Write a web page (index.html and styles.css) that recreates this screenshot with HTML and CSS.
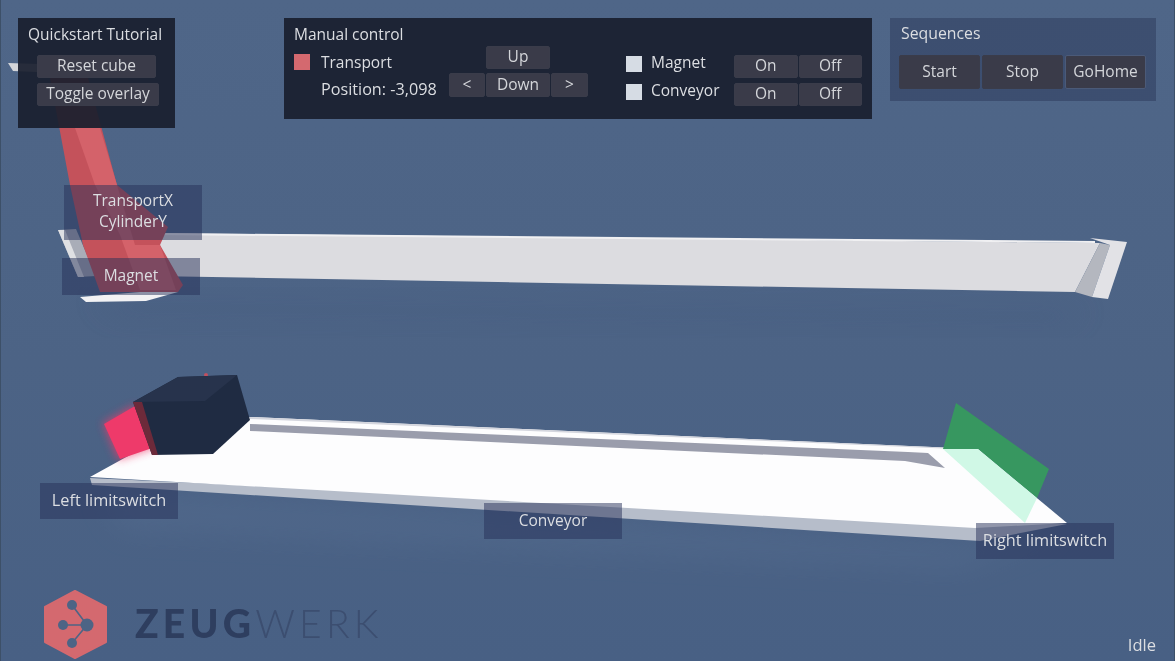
FILE: index.html
```html
<!DOCTYPE html>
<html lang="en">
<head>
  <meta charset="UTF-8">
  <title>Quickstart Tutorial</title>
  <link rel="stylesheet" href="styles.css">
</head>
<body>
  <div class="stage">

    <!-- 3d scene -->
    <svg class="scene" width="1175" height="661" viewBox="0 0 1175 661">
      <defs>
        <filter id="glow" x="-50%" y="-50%" width="200%" height="200%"><feGaussianBlur stdDeviation="4"/></filter>
        <filter id="soft" x="-20%" y="-50%" width="140%" height="200%"><feGaussianBlur stdDeviation="14"/></filter>
      </defs>

      <polygon points="90,300 1090,310 1060,325 120,315" fill="#40557a" opacity=".25" filter="url(#soft)"/>
      <polygon points="100,490 980,545 1070,530 960,570 120,530" fill="#5b7396" opacity=".3" filter="url(#soft)"/>

      <!-- upper rail -->
      <polygon points="8,63 37,64 37,72 13,71" fill="#d4d6da"/>
      <polygon points="58,230 76,229 96,276 78,277" fill="#a9adb8"/>
      <polygon points="58,230 65,230 84,277 78,277" fill="#dfe0e3"/>
      <polygon points="155,233 1100,243 1075,292 150,276" fill="#dcdce0"/>
      <polygon points="155,233 1095,241 1095,243 155,235" fill="#f0f0f2"/>
      <polygon points="1100,243 1110,245 1092,297 1075,292" fill="#b4b7bf"/>
      <polygon points="1090,238 1127,242 1108,299 1092,297 1110,245" fill="#e2e2e6"/>
      <polygon points="80,297 176,289 178,292 146,301 86,302" fill="#f2f2f4"/>

      <!-- transport beam -->
      <polygon points="50,78 88,78 117,185 168,227 160,245 183,285 178,292 100,292 83,245 70,185" fill="#c4525b"/>
      <polygon points="75,128 100,128 117,185 135,245 160,245 176,290 140,290 120,235 95,185" fill="#d4626a"/>

      <!-- conveyor -->
      <polygon points="90,478 92,485 980,541 1067,524" fill="#b6bdca"/>
      <polygon points="90,477 148,445 250,417 978,449 1067,523 975,528" fill="#fdfdfe"/>
      <polygon points="250,424 908,452 928,453 945,468 905,461 250,431" fill="#9a9dac"/>
      <polygon points="250,417 978,449 978,450 250,419" fill="#d4d6de"/>

      <!-- right limit switch -->
      <polygon points="956,403 1049,469 1037,498 978,449 943,449" fill="#379760"/>
      <polygon points="943,449 978,449 1037,498 1025,523" fill="#d0f8e6"/>

      <!-- left limit switch -->
      <polygon points="103,423 135,405 155,448 118,460" fill="#ee3a6a" filter="url(#glow)" opacity=".7"/>
      <polygon points="104,424 135,406 158,446 120,459" fill="#ee3a6a"/>

      <!-- cube -->
      <circle cx="206" cy="375" r="2" fill="#c25060"/>
      <polygon points="133,402 178,377 237,375 250,420 213,454 152,455" fill="#1f2b42"/>
      <polygon points="133,402 178,377 237,375 205,401" fill="#27334c"/>
      <polygon points="133,402 152,455 158,455 142,402" fill="#6c2a3a"/>

      <!-- logo -->
      <polygon points="75,591 106,607 106,642 75,658 45,642 45,607" fill="#d4696f" stroke="#d4696f" stroke-width="2" stroke-linejoin="round"/>
      <path d="M72,605 L87,625 L72,643 M63,625 L87,625" fill="none" stroke="#4d6485" stroke-width="1.6"/>
      <circle cx="72" cy="605" r="5" fill="#4d6485"/>
      <circle cx="63" cy="625" r="5" fill="#4d6485"/>
      <circle cx="72" cy="643" r="5" fill="#4d6485"/>
      <circle cx="87" cy="625" r="6.5" fill="#4d6485"/>
    </svg>

    <div class="wordmark"><b>ZEUG</b>WERK</div>

    <!-- panels -->
    <div class="panel panel-tutorial">
      <div class="title">Quickstart Tutorial</div>
      <button class="btn btn-reset">Reset cube</button>
      <button class="btn btn-overlay">Toggle overlay</button>
    </div>

    <div class="panel panel-manual">
      <div class="title">Manual control</div>
      <div class="manual-body">
        <div class="transport">
          <div class="io"><span class="swatch swatch-red"></span>Transport</div>
          <div class="position">Position: -3,098</div>
        </div>
        <div class="jog">
          <button class="btn jog-up">Up</button>
          <button class="btn jog-left">&lt;</button>
          <button class="btn jog-down">Down</button>
          <button class="btn jog-right">&gt;</button>
        </div>
        <div class="outputs">
          <div class="io"><span class="swatch"></span>Magnet</div>
          <div class="onoff">
            <button class="btn">On</button>
            <button class="btn">Off</button>
          </div>
          <div class="io"><span class="swatch"></span>Conveyor</div>
          <div class="onoff">
            <button class="btn">On</button>
            <button class="btn">Off</button>
          </div>
        </div>
      </div>
    </div>

    <div class="panel panel-seq">
      <div class="title">Sequences</div>
      <div class="seq-buttons">
        <button class="btn">Start</button>
        <button class="btn">Stop</button>
        <button class="btn btn-hover">GoHome</button>
      </div>
    </div>

    <!-- labels on the scene -->
    <div class="tag tag-transport">TransportX<br>CylinderY</div>
    <div class="tag tag-magnet">Magnet</div>
    <div class="tag tag-left">Left limitswitch</div>
    <div class="tag tag-conveyor">Conveyor</div>
    <div class="tag tag-right">Right limitswitch</div>

    <div class="status">Idle</div>
  </div>
</body>
</html>
```

FILE: styles.css
```css
body {
  margin: 0;
  background-color: #4d6485;
  font-family: "Open Sans", "Noto Sans", sans-serif;
  font-size: 15.5px;
  color: #dcdee2;
}

.stage {
  position: relative;
  width: 1175px;
  height: 661px;
  overflow: hidden;
  background: linear-gradient(#4f6688, #4c6385 55%, #486084);
  box-shadow: inset 1px 0 0 #3d5068, inset -1px 0 0 #3d5068;
  filter: blur(0.4px);
}

.scene {
  position: absolute;
  left: 0;
  top: 0;
}

/* logo text */
.wordmark {
  position: absolute;
  left: 135px;
  top: 600px;
  font-family: Lato, sans-serif;
  font-size: 39px;
  line-height: 46px;
  font-weight: 300;
  letter-spacing: 4.2px;
  color: #3c4e70;
}

.wordmark b {
  font-weight: 900;
  color: #2e3e5f;
}

/* panels */
.panel {
  position: absolute;
  box-sizing: border-box;
  background-color: rgba(26, 31, 46, 0.93);
}

.title {
  line-height: 22px;
  white-space: nowrap;
}

.btn {
  box-sizing: border-box;
  margin: 0;
  padding: 0 0 3px;
  height: 23px;
  border: 1px solid #3a3c4a;
  border-radius: 2px;
  background-color: #3a3b49;
  color: #d4d6da;
  font-family: inherit;
  font-size: 15.5px;
  line-height: 18px;
}

.panel-tutorial {
  left: 18px;
  top: 18px;
  width: 157px;
  height: 110px;
  padding: 5px 0 0 10px;
}

.panel-tutorial .btn {
  display: block;
}

.panel-tutorial .btn-reset {
  width: 119px;
  margin: 10px 0 0 9px;
}

.panel-tutorial .btn-overlay {
  width: 122px;
  margin: 5px 0 0 9px;
}

.panel-manual {
  left: 284px;
  top: 18px;
  width: 588px;
  height: 101px;
  padding: 5px 10px 0 10px;
}

.manual-body {
  display: flex;
}

.transport {
  width: 155px;
  padding-top: 3px;
}

.io {
  display: flex;
  align-items: center;
  height: 28px;
  white-space: nowrap;
}

.swatch {
  flex: none;
  width: 16px;
  height: 16px;
  margin: 3px 9px 0 0;
  background-color: #d6dce4;
}

.swatch-red {
  margin: 0 11px 0 0;
  background-color: #d4696f;
}

.position {
  padding-left: 27px;
  font-size: 16.2px;
  line-height: 26px;
  white-space: nowrap;
}

.jog {
  display: grid;
  grid-template-columns: 36px 64px 37px;
  grid-template-rows: 23px 24px;
  column-gap: 1px;
  row-gap: 4px;
  width: 139px;
  margin-top: 1px;
}

.jog .btn {
  height: 100%;
}

.jog-up {
  grid-column: 2;
  grid-row: 1;
}

.jog-left {
  grid-column: 1;
  grid-row: 2;
}

.jog-down {
  grid-column: 2;
  grid-row: 2;
}

.jog-right {
  grid-column: 3;
  grid-row: 2;
}

.outputs {
  display: grid;
  grid-template-columns: 108px 128px;
  grid-auto-rows: 28px;
  margin: 10px 0 0 38px;
}

.outputs .io {
  margin-top: -7px;
}

.onoff {
  display: flex;
  gap: 1px;
}

.onoff .btn {
  width: 64px;
}

.panel-seq {
  left: 890px;
  top: 18px;
  width: 266px;
  height: 83px;
  padding: 4px 9px 0 9px;
  background-color: rgba(28, 36, 70, 0.35);
}

.panel-seq .title {
  padding-left: 2px;
  font-size: 15.8px;
}

.seq-buttons {
  display: flex;
  gap: 2px;
  margin-top: 11px;
}

.seq-buttons .btn {
  width: 81px;
  height: 34px;
  flex: none;
}

.seq-buttons .btn-hover {
  border-color: #4b5a78;
}

/* labels */
.tag {
  position: absolute;
  width: 138px;
  box-sizing: border-box;
  background-color: rgba(38, 48, 88, 0.5);
  text-align: center;
  line-height: 21px;
}

.tag-transport {
  left: 64px;
  top: 185px;
  height: 55px;
  padding-top: 5px;
}

.tag-magnet {
  left: 62px;
  top: 258px;
  height: 37px;
  padding-top: 7px;
}

.tag-left {
  left: 40px;
  top: 483px;
  height: 36px;
  padding-top: 7px;
  font-size: 16.3px;
}

.tag-conveyor {
  left: 484px;
  top: 503px;
  height: 36px;
  padding-top: 7px;
}

.tag-right {
  left: 976px;
  top: 523px;
  height: 36px;
  padding-top: 7px;
  font-size: 16.3px;
}

.status {
  position: absolute;
  right: 19px;
  top: 634px;
  font-size: 16.5px;
  line-height: 22px;
}
```
